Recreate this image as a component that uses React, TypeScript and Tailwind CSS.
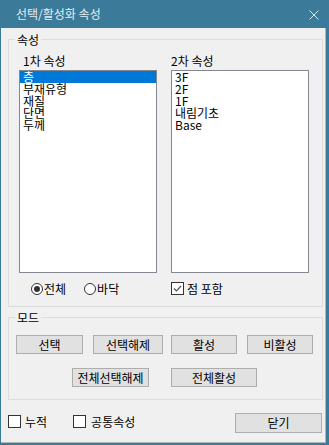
import React from "react";

const list1 = ["층", "부재유형", "재질", "단면", "두께"];
const list2 = ["3F", "2F", "1F", "내림기초", "Base"];

function Btn({ label, className }: { label: string; className: string }) {
  return (
    <div
      className={
        "h-[19px] bg-[#e1e1e1] border border-[#adadad] flex items-center justify-center leading-[17px] " +
        className
      }
    >
      {label}
    </div>
  );
}

function Check({ checked }: { checked?: boolean }) {
  return (
    <span className="w-[13px] h-[13px] shrink-0 border border-[#333333] bg-white flex items-center justify-center">
      {checked ? (
        <svg width="9" height="9" viewBox="0 0 9 9">
          <path d="M1 4.5 L3.5 7 L8 2" fill="none" stroke="#555555" strokeWidth="1.2" />
        </svg>
      ) : null}
    </span>
  );
}

function Radio({ checked }: { checked?: boolean }) {
  return (
    <span className="w-[12px] h-[12px] shrink-0 rounded-full border border-[#333333] bg-white flex items-center justify-center">
      {checked ? <span className="w-[6px] h-[6px] rounded-full bg-[#333333]" /> : null}
    </span>
  );
}

export default function App() {
  return (
    <div className="w-[329px] h-[445px] bg-[#3b7a99] flex flex-col font-['Noto_Sans_CJK_KR',sans-serif] text-[12px] text-black overflow-hidden">
      <div className="h-[28px] shrink-0 flex items-center justify-between pl-[16px] pr-[10px] text-[#e4edf2]">
        <span className="leading-[14px] text-[12px]">선택/활성화 속성</span>
        <svg width="10" height="10" viewBox="0 0 10 10" className="mt-[2px]">
          <path d="M0.5 0.5 L9.5 9.5 M9.5 0.5 L0.5 9.5" stroke="#dfe9ee" strokeWidth="1" />
        </svg>
      </div>
      <div className="flex-1 ml-[1px] mr-[3px] mb-[3px] bg-[#f0f0f0] border-r border-b border-[#b4b4b4] flex flex-col pl-[7px] pr-[2px] pt-[4px] pb-[9px]">
        <fieldset className="border border-[#dcdcdc] m-0 p-0 pb-[11px]">
          <legend className="ml-[6px] px-[2px] h-[15px] leading-[15px]">속성</legend>
          <div className="flex pl-[10px] pt-[6px]">
            <div className="w-[152px] flex flex-col">
              <div className="h-[15px] leading-[15px] pl-[4px]">1차 속성</div>
              <div className="mt-[2px] w-[138px] h-[203px] border border-[#828790] bg-white flex flex-col">
                {list1.map((t, i) => (
                  <div
                    key={t}
                    className={
                      "h-[12px] leading-[12px] pl-[3px] whitespace-nowrap " +
                      (i === 0 ? "bg-[#0078d7] text-white" : "")
                    }
                  >
                    {t}
                  </div>
                ))}
              </div>
              <div className="mt-[9px] h-[13px] flex items-center pl-[12px]">
                <Radio checked />
                <span className="ml-[1px] leading-[13px]">전체</span>
                <span className="ml-[18px]">
                  <Radio />
                </span>
                <span className="ml-[1px] leading-[13px]">바닥</span>
              </div>
            </div>
            <div className="flex flex-col">
              <div className="h-[15px] leading-[15px]">2차 속성</div>
              <div className="mt-[2px] w-[138px] h-[203px] border border-[#828790] bg-white flex flex-col">
                {list2.map((t) => (
                  <div key={t} className="h-[12px] leading-[12px] pl-[3px] whitespace-nowrap">
                    {t}
                  </div>
                ))}
              </div>
              <div className="mt-[9px] h-[13px] flex items-center">
                <Check checked />
                <span className="ml-[3px] leading-[13px]">점 포함</span>
              </div>
            </div>
          </div>
        </fieldset>
        <fieldset className="mt-[3px] border border-[#dcdcdc] m-0 p-0 pb-[12px]">
          <legend className="ml-[6px] px-[2px] h-[15px] leading-[15px]">모드</legend>
          <div className="flex pt-[10px]">
            <Btn label="선택" className="ml-[7px] w-[67px]" />
            <Btn label="선택해제" className="ml-[10px] w-[70px]" />
            <Btn label="활성" className="ml-[8px] w-[66px]" />
            <Btn label="비활성" className="ml-[10px] w-[66px]" />
          </div>
          <div className="flex mt-[14px]">
            <Btn label="전체선택해제" className="ml-[63px] w-[77px]" />
            <Btn label="전체활성" className="ml-[22px] w-[86px]" />
          </div>
        </fieldset>
        <div className="mt-[13px] flex items-start">
          <div className="mt-[2px] flex items-center h-[13px]">
            <Check />
            <span className="ml-[4px] leading-[13px]">누적</span>
          </div>
          <div className="mt-[2px] ml-[26px] flex items-center h-[13px]">
            <Check />
            <span className="ml-[5px] leading-[13px]">공통속성</span>
          </div>
          <div className="ml-auto mr-[1px] w-[87px] h-[20px] bg-[#e1e1e1] border border-[#adadad] flex items-center justify-center leading-[18px]">
            닫기
          </div>
        </div>
      </div>
    </div>
  );
}
